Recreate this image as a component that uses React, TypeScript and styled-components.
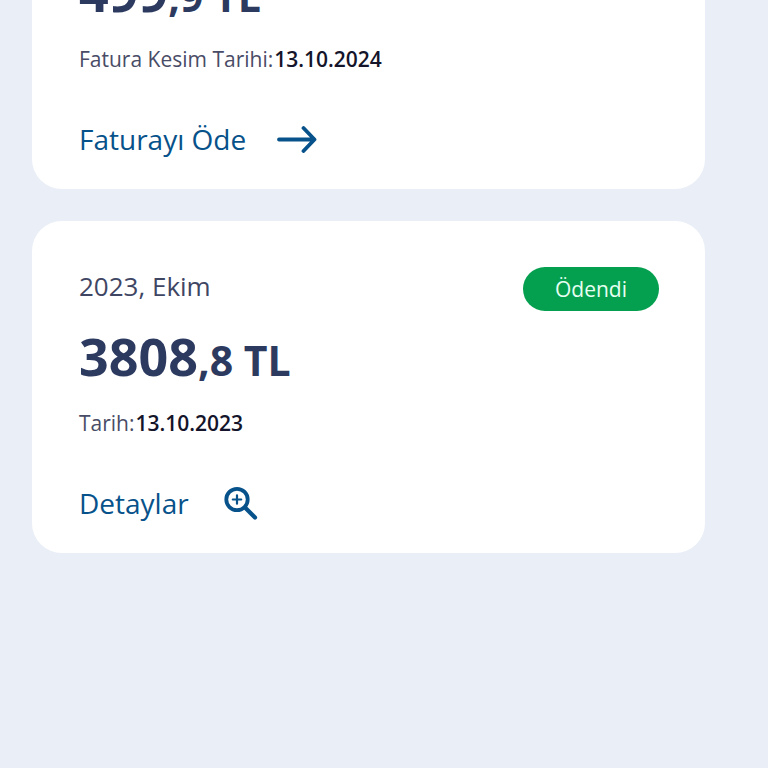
import React from "react";
import styled, { createGlobalStyle } from "styled-components";

const GlobalStyle = createGlobalStyle`
  *, *::before, *::after { box-sizing: border-box; }
  body {
    margin: 0;
    background: #eaeff7;
    font-family: "Open Sans", "Noto Sans", sans-serif;
    color: #2f3d60;
  }
`;

const Page = styled.main`
  display: flex;
  flex-direction: column;
  justify-content: flex-end;
  gap: 32px;
  height: 100vh;
  overflow: hidden;
  padding: 0 63px 215px 32px;
`;

const Card = styled.article`
  flex: none;
  padding: 46px 46px 30px 47px;
  border-radius: 30px;
  background: #fff;
`;

const Header = styled.header`
  display: flex;
  align-items: flex-start;
  justify-content: space-between;
  height: 38px;
`;

const Period = styled.h2`
  margin: 0;
  font-size: 26px;
  font-weight: 400;
  line-height: 38px;
  color: #3f4664;
`;

const Badge = styled.span<{ $paid: boolean }>`
  padding: 0 32px;
  border-radius: 22px;
  background: ${(p) => (p.$paid ? "#05a04f" : "#d64545")};
  color: #e6fff2;
  font-size: 21px;
  line-height: 44px;
`;

const Amount = styled.p`
  margin: 14px 0 0;
  font-size: 52px;
  font-weight: 700;
  line-height: 74px;
  color: #2d3a60;
`;

const Fraction = styled.span`
  font-size: 41px;
  line-height: 1;
`;

const DateLine = styled.p`
  display: flex;
  gap: 1px;
  margin: 14px 0 0;
  font-size: 21px;
  line-height: 32px;
  color: #494c66;
`;

const DateValue = styled.time`
  font-weight: 600;
  color: #14142a;
`;

const Action = styled.a<{ $gap: number }>`
  display: flex;
  align-items: center;
  gap: ${(p) => p.$gap}px;
  width: fit-content;
  margin-top: 44px;
  font-size: 28px;
  line-height: 40px;
  color: #07528a;
  text-decoration: none;

  svg {
    flex: none;
    fill: none;
    stroke: currentColor;
    stroke-linecap: round;
    stroke-linejoin: round;
  }
`;

const ArrowIcon = () => (
  <svg width="40" height="28" viewBox="0 0 40 28" strokeWidth="3.8" aria-hidden="true">
    <path d="M2 14.5H36.5M26.5 3L37.5 14.5L26.5 26" />
  </svg>
);

const ZoomIcon = () => (
  <svg width="36" height="36" viewBox="0 0 36 36" aria-hidden="true">
    <circle cx="14" cy="14.5" r="10.7" strokeWidth="3.8" />
    <path d="M14 10.3V18.7M9.8 14.5H18.2" strokeWidth="2.2" />
    <path d="M22 22.5L32 32.5" strokeWidth="4.2" />
  </svg>
);

type Bill = {
  period: string;
  whole: string;
  fraction: string;
  label: string;
  date: string;
  iso: string;
  paid: boolean;
};

const bills: Bill[] = [
  { period: "2024, Ekim", whole: "499", fraction: ",9 TL", label: "Fatura Kesim Tarihi:", date: "13.10.2024", iso: "2024-10-13", paid: false },
  { period: "2023, Ekim", whole: "3808", fraction: ",8 TL", label: "Tarih:", date: "13.10.2023", iso: "2023-10-13", paid: true },
];

const BillCard = ({ bill }: { bill: Bill }) => (
  <Card>
    <Header>
      <Period>{bill.period}</Period>
      {bill.paid && <Badge $paid>Ödendi</Badge>}
    </Header>
    <Amount>
      {bill.whole}
      <Fraction>{bill.fraction}</Fraction>
    </Amount>
    <DateLine>
      <span>{bill.label}</span>
      <DateValue dateTime={bill.iso}>{bill.date}</DateValue>
    </DateLine>
    {bill.paid ? (
      <Action href="#detaylar" $gap={34}>
        Detaylar
        <ZoomIcon />
      </Action>
    ) : (
      <Action href="#ode" $gap={31}>
        Faturayı Öde
        <ArrowIcon />
      </Action>
    )}
  </Card>
);

export default function App() {
  return (
    <>
      <GlobalStyle />
      <Page>
        {bills.map((bill) => (
          <BillCard key={bill.iso} bill={bill} />
        ))}
      </Page>
    </>
  );
}
